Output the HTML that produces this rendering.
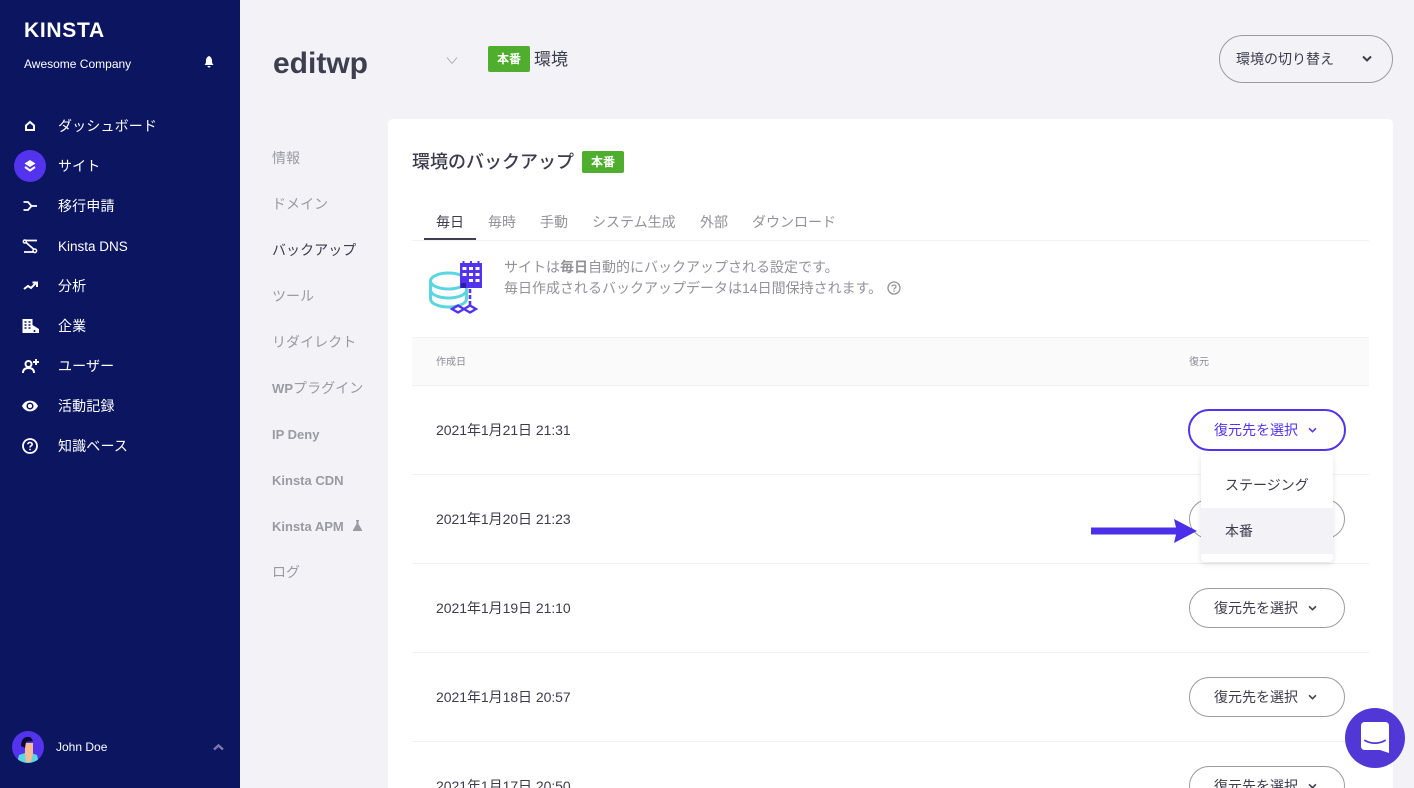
<!DOCTYPE html>
<html lang="ja"><head><meta charset="utf-8"><title>環境のバックアップ</title>
<style>
html,body{margin:0;padding:0;width:1414px;height:788px;overflow:hidden}
body{position:relative;background:#f2f2f7;font-family:"Liberation Sans","Noto Sans CJK JP",sans-serif;color:#3d3c4e}
div,span,svg{position:absolute;white-space:nowrap}
#w{left:0;top:0;width:1414px;height:788px;overflow:hidden;background:#f2f2f7}
b{font-weight:700}
.side{left:0;top:0;width:240px;height:788px;background:#0b1560}
.m{left:58px;font-size:14px;line-height:20px;color:#fff;font-weight:400;letter-spacing:.15px}
.i{left:20px;width:20px;height:20px;fill:none;stroke:#fff;stroke-width:2}
.s{left:272px;font-size:14px;line-height:20px;color:#9a9aa3;letter-spacing:.05px}
.l{font-size:13px;font-weight:700;letter-spacing:0}
.tab{top:212px;font-size:14px;line-height:20px;color:#929299}
.date{left:436px;font-size:14px;line-height:20px;color:#3d3c4e;letter-spacing:-.05px}
.line{left:412px;width:957px;height:1px;background:#f0f0f3}
.btn{left:1189px;width:154px;height:38px;border:1px solid #9b9ba0;border-radius:20px;background:#fff}
.bt{left:1214px;font-size:14px;line-height:20px;color:#3d3c4e}
.ch{width:10px;height:7px;fill:none;stroke:#3d3c4e;stroke-width:2}
.tag{background:#4fae2d;color:#fff;font-size:12px;font-weight:700;text-align:center;border-radius:2px}
</style></head><body><div id="w">
<div class="side"></div>
<div style="left:24px;top:17px;font-size:21px;line-height:28px;font-weight:700;color:#fff;letter-spacing:.7px">KINSTA</div>
<div style="left:24px;top:55px;font-size:12px;line-height:18px;color:#fff;font-weight:400">Awesome Company</div>
<svg style="left:203px;top:56px" width="12" height="12" viewBox="0 0 12 12"><path d="M6 0C3.800 1 3 2.500 3 5c0 2-.6 3-1.500 4h9C9.600 8 9 7 9 5c0-2.500-.8-4-3-5zM4.500 10a1.500 1.500 0 003 0z" fill="#fff"/></svg>
<svg class="i" style="top:116px" viewBox="0 0 20 20"><path d="M6 9.500L10 6l4 3.500V14H6z"/></svg>
<div class="m" style="top:116px">ダッシュボード</div>
<div style="left:14px;top:150px;width:32px;height:32px;border-radius:50%;background:#5333ed"></div>
<svg class="i" style="top:156px" viewBox="0 0 20 20"><path d="M10 4l5.500 3.500L10 11 4.500 7.500z" fill="#fff" stroke="none"/><path d="M5 11l5 3.500 5-3.500" stroke-width="2"/></svg>
<div class="m" style="top:156px">サイト</div>
<svg class="i" style="top:196px" viewBox="0 0 20 20"><path d="M3.500 6H8l3.500 4L8 14H3.500M11 10h6" stroke-width="1.800"/></svg>
<div class="m" style="top:196px">移行申請</div>
<svg class="i" style="top:236px" viewBox="0 0 20 20"><path d="M6 4.500h11M4 16h9M6 6.500l7.500 6.500" stroke-width="1.800"/><circle cx="4.800" cy="5.500" r="1.500" stroke-width="1.500"/><circle cx="14.800" cy="14.800" r="1.800" stroke-width="1.500"/></svg>
<div class="m" style="top:237px;font-size:13.500px;letter-spacing:0">Kinsta DNS</div>
<svg class="i" style="top:276px" viewBox="0 0 20 20"><path d="M4 13l4-3 3 2 5-5M12.500 6.500H17V11" stroke-width="2"/></svg>
<div class="m" style="top:276px">分析</div>
<svg class="i" style="top:316px;left:22px;width:18px;height:18px" viewBox="0 0 18 18"><path d="M.5 3h10v14H.5zM10.500 9l6.500 4v4h-6.500z" fill="#fff" stroke="none"/><path d="M2.500 6h2M6.500 6h2M2.500 9h2M6.500 9h2M2.500 12h2M6.500 12h2M12.500 14v2" stroke="#0b1560" stroke-width="1.600"/></svg>
<div class="m" style="top:316px">企業</div>
<svg class="i" style="top:356px;left:21px;width:20px" viewBox="0 0 20 20"><circle cx="7.500" cy="8" r="3" stroke-width="2"/><path d="M2 17c0-3.500 2-5 5.500-5s5.500 1.500 5.500 5" stroke-width="2"/><path d="M15 3v6M12 6h6"/></svg>
<div class="m" style="top:356px">ユーザー</div>
<svg class="i" style="top:396px" viewBox="0 0 20 20"><path d="M2.500 10c3.500-6.500 11.500-6.500 15 0-3.500 6.500-11.500 6.500-15 0z" fill="#fff" stroke="#fff" stroke-width="1"/><circle cx="10" cy="10" r="2.800" fill="#fff" stroke="#0b1560" stroke-width="1.500"/></svg>
<div class="m" style="top:396px">活動記録</div>
<svg class="i" style="top:436px" viewBox="0 0 20 20"><circle cx="10" cy="10" r="7" stroke-width="1.800"/><path d="M7.800 8.200C8 5.800 12.200 6 12.200 8.300c0 1.500-2.200 1.600-2.200 3.200" stroke-width="1.600"/><path d="M10 12.800v1.400" stroke-width="1.600"/></svg>
<div class="m" style="top:436px">知識ベース</div>
<svg style="left:12px;top:731px" width="32" height="32" viewBox="0 0 32 32"><defs><clipPath id="c"><circle cx="16" cy="16" r="16"/></clipPath></defs><g clip-path="url(#c)"><rect width="32" height="32" fill="#5333ed"/><path d="M5 32l2-8 9-3 9 3 2 8z" fill="#5ad8e0"/><path d="M13 12h8v10l-2 9h-5l-1-9z" fill="#f7bd92"/><path d="M9 15c0-7 4-10 8-9 2 0 3 2 4 4-3 1-5 0-7 1l-1 6z" fill="#0a0a33"/></g></svg>
<div style="left:56px;top:738px;font-size:12px;line-height:18px;color:#fff">John Doe</div>
<svg style="left:213px;top:743px;fill:none;stroke:#7d78ad;stroke-width:2.500" width="11" height="8" viewBox="0 0 11 8"><path d="M1 6.500l4.500-4 4.500 4"/></svg>

<div style="left:273px;top:45px;font-size:30px;line-height:38px;font-weight:700;color:#3f3e50">editwp</div>
<svg style="left:446px;top:56px;fill:none;stroke:#b5b5bc;stroke-width:1" width="12" height="9" viewBox="0 0 12 9"><path d="M1 1.500l5 6 5-6"/></svg>
<div class="tag" style="left:488px;top:46px;width:42px;height:26px;line-height:26px">本番</div>
<div style="left:534px;top:48px;font-size:17px;line-height:24px;color:#3d3c4e">環境</div>
<div style="left:1219px;top:35px;width:172px;height:46px;border:1px solid #9b9ba0;border-radius:24px"></div>
<div style="left:1236px;top:49px;font-size:14px;line-height:20px;color:#3d3c4e">環境の切り替え</div>
<svg class="ch" style="left:1362px;top:55px" viewBox="0 0 10 7"><path d="M1 1.500l4 4 4-4"/></svg>

<div class="s" style="top:148px">情報</div>
<div class="s" style="top:194px">ドメイン</div>
<div class="s" style="top:240px;color:#3d3c4e">バックアップ</div>
<div class="s" style="top:286px">ツール</div>
<div class="s" style="top:332px">リダイレクト</div>
<div class="s" style="top:378px"><b style="font-size:13px">WP</b>プラグイン</div>
<div class="s l" style="top:425px">IP Deny</div>
<div class="s l" style="top:471px">Kinsta CDN</div>
<div class="s l" style="top:517px">Kinsta APM</div>
<svg style="left:353px;top:520px" width="9" height="11" viewBox="0 0 9 11"><path d="M3 0h3v1l-.5.500V4L9 10v1H0v-1l3.500-6V1.500L3 1z" fill="#9a9aa3"/></svg>
<div class="s" style="top:562px">ログ</div>

<div style="left:388px;top:119px;width:1005px;height:680px;background:#fff;border-radius:5px"></div>
<div style="left:412px;top:150px;font-size:18px;line-height:24px;color:#3d3c4e;font-weight:500">環境のバックアップ</div>
<div class="tag" style="left:582px;top:151px;width:42px;height:22px;line-height:22px">本番</div>

<div class="tab" style="left:436px;color:#3d3c4e">毎日</div>
<div class="tab" style="left:488px">毎時</div>
<div class="tab" style="left:540px">手動</div>
<div class="tab" style="left:592px">システム生成</div>
<div class="tab" style="left:700px">外部</div>
<div class="tab" style="left:752px">ダウンロード</div>
<div style="left:412px;top:240px;width:957px;height:1px;background:#f0f0f5"></div>
<div style="left:424px;top:238px;width:52px;height:2px;background:#3f3e50"></div>

<svg style="left:424px;top:255px" width="70" height="65" viewBox="0 0 70 65"><g fill="none" stroke="#5bd5e0" stroke-width="3"><ellipse cx="24.500" cy="26" rx="18" ry="8"/><path d="M6.500 26v18c0 4.400 8 8 18 8s18-3.600 18-8V26M6.500 35c0 4.400 8 8 18 8s18-3.600 18-8"/></g><path d="M36 8h22v25H36z" fill="#5333ed"/><path d="M39.500 6v4M47 6v4M54.500 6v4" stroke="#5333ed" stroke-width="2"/><path d="M38.500 12h4v3h-4zM45 12h4v3h-4zM51.500 12h4v3h-4zM38.500 18h4v3h-4zM45 18h4v3h-4zM51.500 18h4v3h-4zM45 24h4v3h-4zM51.500 24h4v3h-4z" fill="#fff"/><path d="M37 28h5v5h-5z" fill="#2a20a8"/><path d="M46 34v16" stroke="#5333ed" stroke-width="2.600" stroke-dasharray="4 2"/><path d="M40 54l-6-3.500-6 3.500 6 3.500zM52 54l-6-3.500-6 3.500 6 3.500z" fill="none" stroke="#5333ed" stroke-width="2.400"/></svg>
<div style="left:504px;top:257px;font-size:14px;line-height:20px;color:#929299">サイトは<b>毎日</b>自動的にバックアップされる設定です。</div>
<div style="left:504px;top:278px;font-size:14px;line-height:20px;color:#929299">毎日作成されるバックアップデータは14日間保持されます。</div>
<svg style="left:887px;top:281px;fill:none;stroke:#929299" width="14" height="14" viewBox="0 0 14 14"><circle cx="7" cy="7" r="6" stroke-width="1.300"/><path d="M5 5.500C5.200 3.500 9 3.700 9 5.600 9 7 7 7 7 8.500M7 9.500v1.400" stroke-width="1.200"/></svg>

<div style="left:412px;top:337px;width:957px;height:49px;background:#fafafa;border-top:1px solid #f3f3f5;border-bottom:1px solid #f0f0f3;box-sizing:border-box"></div>
<div style="left:436px;top:354px;font-size:10px;line-height:18px;color:#8a8a92">作成日</div>
<div style="left:1189px;top:354px;font-size:10px;line-height:18px;color:#8a8a92">復元</div>

<div class="date" style="top:420px">2021年1月21日 21:31</div>
<div class="line" style="top:474px"></div>
<div class="date" style="top:509px">2021年1月20日 21:23</div>
<div class="line" style="top:563px"></div>
<div class="date" style="top:598px">2021年1月19日 21:10</div>
<div class="line" style="top:652px"></div>
<div class="date" style="top:687px">2021年1月18日 20:57</div>
<div class="line" style="top:741px"></div>
<div class="date" style="top:776px">2021年1月17日 20:50</div>

<div style="left:1188px;top:409px;width:154px;height:38px;border:2px solid #5333ed;border-radius:21px;background:#fff"></div>
<div class="bt" style="top:420px;color:#5333ed">復元先を選択</div>
<svg class="ch" style="left:1308px;top:427px;stroke:#5333ed;width:9px;height:6px;stroke-width:1.800" viewBox="0 0 10 7"><path d="M1 1.500l4 4 4-4"/></svg>

<div class="btn" style="top:499px"></div>
<div class="btn" style="top:588px"></div>
<div class="bt" style="top:598px">復元先を選択</div>
<svg class="ch" style="left:1308px;top:605px;width:9px;height:6px;stroke-width:1.800" viewBox="0 0 10 7"><path d="M1 1.500l4 4 4-4"/></svg>
<div class="btn" style="top:677px"></div>
<div class="bt" style="top:687px">復元先を選択</div>
<svg class="ch" style="left:1308px;top:694px;width:9px;height:6px;stroke-width:1.800" viewBox="0 0 10 7"><path d="M1 1.500l4 4 4-4"/></svg>
<div class="btn" style="top:766px"></div>
<div class="bt" style="top:776px">復元先を選択</div>
<svg class="ch" style="left:1308px;top:783px;width:9px;height:6px;stroke-width:1.800" viewBox="0 0 10 7"><path d="M1 1.500l4 4 4-4"/></svg>

<div style="left:1201px;top:454px;width:132px;height:108px;background:#fff;border-radius:4px;box-shadow:0 2px 6px rgba(40,40,70,.14)"></div>
<div style="left:1201px;top:508px;width:132px;height:46px;background:#f2f2f7"></div>
<div style="left:1225px;top:475px;font-size:14px;line-height:20px;color:#3d3c4e">ステージング</div>
<div style="left:1225px;top:521px;font-size:14px;line-height:20px;color:#3d3c4e">本番</div>
<svg style="left:1091px;top:518px" width="107" height="26" viewBox="0 0 107 26"><path d="M0 9.500h85L83 1l23 12-23 12 2-8.500H0z" fill="#4c2fe8"/></svg>

<div style="left:1345px;top:708px;width:60px;height:60px;border-radius:50%;background:#5138d6"></div>
<svg style="left:1361px;top:722px" width="29" height="32" viewBox="0 0 29 32"><path d="M3.500 0h21A3.500 3.500 0 0128 3.500V31l-9-3H3.500A3.500 3.500 0 010 24.500v-21A3.500 3.500 0 013.500 0z" fill="#fff"/><path d="M4 18.500c6 3.500 14 3.500 20 0" fill="none" stroke="#5138d6" stroke-width="1.800" stroke-linecap="round"/></svg>
</div></body></html>
